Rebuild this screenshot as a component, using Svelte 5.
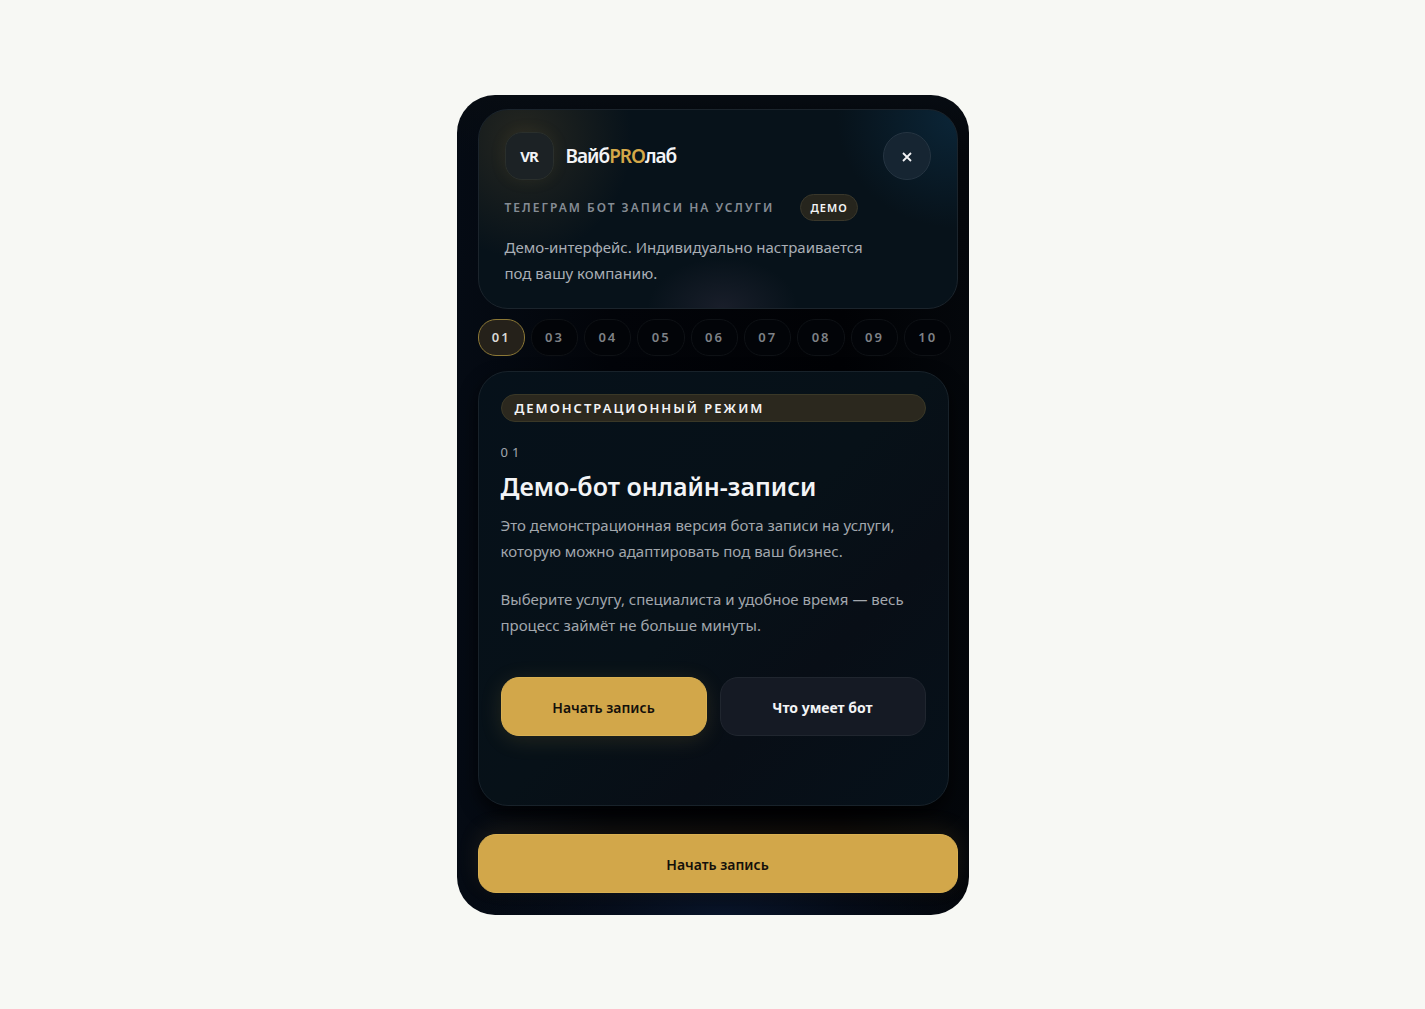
<script lang="ts">
	interface Step {
		id: string;
		title: string;
		text: string[];
	}

	const step: Step = {
		id: '01',
		title: 'Демо-бот онлайн-записи',
		text: [
			'Это демонстрационная версия бота записи на услуги, которую можно адаптировать под ваш бизнес.',
			'Выберите услугу, специалиста и удобное время — весь процесс займёт не больше минуты.'
		]
	};
	const steps = ['01', '03', '04', '05', '06', '07', '08', '09', '10'];

	let active = $state('01');
</script>

<main class="page">
	<div class="phone">
		<header class="hero">
			<div class="top">
				<span class="logo">VR</span>
				<span class="brand">Вайб<em>PRO</em>лаб</span>
				<button class="close" type="button" aria-label="Закрыть">
					<svg viewBox="0 0 12 12" width="12" height="12" aria-hidden="true">
						<path d="M2 3l8 8M10 3l-8 8" />
					</svg>
				</button>
			</div>
			<div class="sub">
				<span class="kicker">Телеграм бот записи на услуги</span>
				<span class="badge">Демо</span>
			</div>
			<p class="lead">Демо-интерфейс. Индивидуально настраивается под вашу компанию.</p>
		</header>

		<nav class="steps">
			{#each steps as s (s)}
				<button type="button" class:active={s === active} onclick={() => (active = s)}>{s}</button>
			{/each}
		</nav>

		<section class="card">
			<span class="mode">Демонстрационный режим</span>
			<span class="num">{step.id}</span>
			<h1>{step.title}</h1>
			{#each step.text as t}
				<p>{t}</p>
			{/each}
			<div class="actions">
				<button class="btn primary" type="button">Начать запись</button>
				<button class="btn ghost" type="button">Что умеет бот</button>
			</div>
		</section>

		<button class="btn primary wide" type="button">Начать запись</button>
	</div>
</main>

<style>
	:global(body) {
		background: #f7f8f4;
	}
	.page {
		display: flex;
		align-items: center;
		justify-content: center;
		min-height: 100vh;
		font-family: 'Noto Sans', 'Open Sans', sans-serif;
		color: #f3f4f6;
	}
	.phone {
		box-sizing: border-box;
		display: flex;
		flex-direction: column;
		width: 100%;
		max-width: 512px;
		padding: 14px 11px 22px 21px;
		border-radius: 38px;
		overflow: hidden;
		background:
			radial-gradient(260px 60px at 52% 100%, #081429, transparent),
			linear-gradient(#070c12, transparent 60px),
			linear-gradient(90deg, #050b14, #020409 30%, #010205 75%, #04070b);
	}
	button {
		font-family: inherit;
		cursor: pointer;
	}
	.hero {
		padding: 22px 26px;
		border: 1px solid #1b242c;
		border-radius: 30px;
		background:
			radial-gradient(110px 120px at 9% 14%, #252620, transparent),
			radial-gradient(120px 110px at 100% 4%, #0b2537, transparent),
			radial-gradient(75px 50px at 51% 100%, #191e2a, transparent),
			#07121a;
	}
	.top {
		display: flex;
		align-items: center;
	}
	.logo {
		box-sizing: border-box;
		display: grid;
		place-items: center;
		width: 49px;
		height: 48px;
		border: 1px solid #2a2f2c;
		border-radius: 17px;
		background: #1c2225;
		box-shadow: 0 0 18px #b8963a14;
		font-size: 15px;
		font-weight: 700;
		letter-spacing: -1px;
	}
	.brand {
		margin-left: 12px;
		font-size: 19px;
		font-weight: 600;
		letter-spacing: -1px;
	}
	.brand em {
		color: #d4a849;
		font-style: normal;
	}
	.close {
		display: grid;
		place-items: center;
		width: 48px;
		height: 48px;
		margin-left: auto;
		padding: 0;
		border: 1px solid #263542;
		border-radius: 50%;
		background: #162532;
	}
	.close path {
		fill: none;
		stroke: #f3f4f6;
		stroke-width: 1.8;
	}
	.sub {
		display: flex;
		align-items: center;
		gap: 26px;
		margin-top: 14px;
	}
	.kicker {
		font-size: 12px;
		font-weight: 600;
		letter-spacing: 2px;
		text-transform: uppercase;
		color: #858c94;
	}
	.badge {
		box-sizing: border-box;
		height: 27px;
		padding: 0 9px;
		border: 1px solid #39372b;
		border-radius: 14px;
		background: #26251d;
		font-size: 11px;
		font-weight: 600;
		line-height: 25px;
		letter-spacing: 1px;
		text-transform: uppercase;
	}
	.lead {
		max-width: 370px;
		margin: 13px 0 0;
		font-size: 15px;
		line-height: 26px;
		color: #a9aeb5;
	}
	.steps {
		display: flex;
		gap: 6px;
		margin: 10px 6px 0 0;
	}
	.steps button {
		flex: 1;
		height: 37px;
		padding: 0;
		border: 1px solid #0e1115;
		border-radius: 18px;
		background: #020408;
		color: #7e8186;
		font-size: 13px;
		font-weight: 600;
		letter-spacing: 2px;
	}
	.steps button.active {
		border-color: #8c7836;
		background: #25211a;
		color: #d9d8d5;
	}
	.card {
		display: flex;
		flex-direction: column;
		margin: 15px 9px 0 0;
		padding: 22px 22px 69px;
		border: 1px solid #18222a;
		border-radius: 30px;
		background: linear-gradient(135deg, #06111a, #071118 50%, #080e16 70%, #06111a);
		box-shadow: 0 8px 18px #000000aa;
	}
	.mode {
		padding: 0 13px;
		border: 1px solid #3a3827;
		border-radius: 14px;
		background: #2b281e;
		font-size: 13px;
		font-weight: 600;
		line-height: 26px;
		letter-spacing: 2px;
		text-transform: uppercase;
	}
	.num {
		margin-top: 21px;
		font-size: 13px;
		line-height: 18px;
		letter-spacing: 4px;
		color: #a2a7ad;
	}
	h1 {
		margin: 7px 0 8px;
		font-size: 25px;
		font-weight: 600;
		line-height: 36px;
	}
	.card p {
		margin: 0 0 22px;
		font-size: 15px;
		line-height: 26px;
		color: #a2a7ad;
	}
	.actions {
		display: grid;
		grid-template-columns: 1fr 1fr;
		gap: 13px;
		margin-top: 17px;
	}
	.btn {
		height: 59px;
		padding: 2px 0 0;
		border: 1px solid transparent;
		border-radius: 18px;
		font-size: 14px;
		font-weight: 600;
	}
	.primary {
		border-color: #d9b052;
		background: #d2a74a;
		color: #14100a;
		box-shadow: 0 4px 22px #d2a74a24;
	}
	.ghost {
		border-color: #20262f;
		background: #151a24;
		color: #f3f4f6;
		font-weight: 700;
	}
	.wide {
		margin-top: 28px;
		box-shadow: 0 -6px 22px #d2a74a1c;
	}
</style>
